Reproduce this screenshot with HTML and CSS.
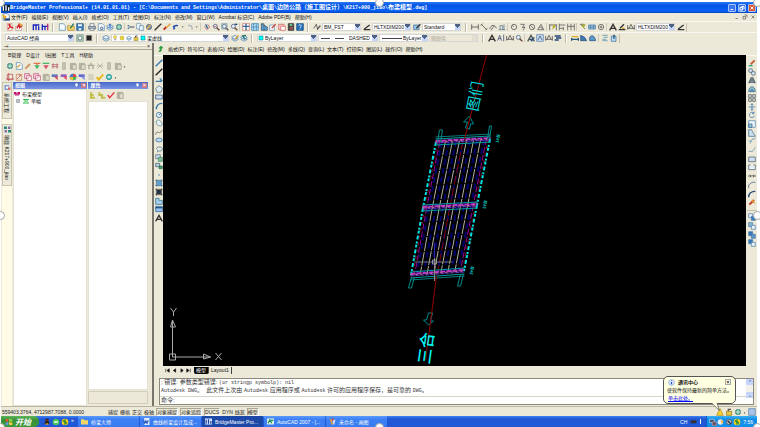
FILE: index.html
```html
<!DOCTYPE html>
<html lang="zh-CN">
<head>
<meta charset="utf-8">
<title>BridgeMaster Professional+</title>
<link rel="stylesheet" href="styles.css">
</head>
<body>
<div class="desktop">
  <header class="titlebar">
    <svg class="icon" viewBox="0 0 12 12"><path fill="#123" d="M0 1h12v10H0z"/><path stroke="#fff" stroke-width="2" d="M2 3v7M6 2v8M10 5v5"/></svg>
    <h1><span class="lat">BridgeMaster Professional+ (14.01.01.01) - [C:\Documents and Settings\Administrator\</span>桌面<span class="lat">\</span>边防公路（施工图设计）<span class="lat">\K217+900_jiao\</span>布梁模型<span class="lat">.dwg]</span></h1>
    <div class="winbtns">
      <button aria-label="最小化"><svg viewBox="0 0 12 12"><path d="M3 9h5"/></svg></button>
      <button aria-label="还原"><svg viewBox="0 0 12 12"><path d="M5 3h5v5M2 5h5v5H2z"/></svg></button>
      <button class="close" aria-label="关闭"><svg viewBox="0 0 12 12"><path d="M3 3l6 6M9 3l-6 6"/></svg></button>
    </div>
  </header>

  <nav class="menubar">
    <svg class="icon" viewBox="0 0 12 12"><path fill="#fff" stroke="#36a" d="M2 1h6l3 3v7H2z"/><path fill="#e8b020" d="M0 2l7 3-3 6z"/><path fill="#247" d="M4 8h8v3H4z"/></svg>
    <div class="items">
    <a href="#">文件(F)</a><a href="#">编辑(E)</a><a href="#">视图(V)</a><a href="#">插入(I)</a><a href="#">格式(O)</a><a href="#">工具(T)</a><a href="#">绘图(D)</a><a href="#">标注(N)</a><a href="#">修改(M)</a><a href="#">窗口(W)</a><a href="#">Acrobat 标记(C)</a><a href="#">Adobe PDF(B)</a><a href="#">帮助(H)</a>
    </div>
    <div class="docbtns">
      <button aria-label="最小化文档"><svg viewBox="0 0 12 12"><path d="M3 9h5"/></svg></button>
      <button aria-label="还原文档"><svg viewBox="0 0 12 12"><path d="M5 2h5v5M2 5h5v5H2z"/></svg></button>
      <button aria-label="关闭文档"><svg viewBox="0 0 12 12"><path d="M3 3l6 6M9 3l-6 6"/></svg></button>
    </div>
  </nav>

  <div class="toolrow">
    <div class="tools" data-icons="pdf pdfmail grip piers piers2 grip new open save sep print preview publish globe sep cut copy globe2 match brush undo caret redo caret sep pan zoomin zoomwin zoomprev sep props palette sheet markup calc2 calc help2 grip textstyle"></div>
    <label class="combo w-s"><select aria-label="文字样式"><option>BM_FST</option></select><i></i></label>
    <div class="tools" data-icons="dimstyle"></div>
    <label class="combo w-s"><select aria-label="标注样式"><option>HLTXDIM200</option></select><i></i></label>
    <div class="tools" data-icons="tablestyle"></div>
    <label class="combo w-s"><select aria-label="表格样式"><option>Standard</option></select><i></i></label>
    <div class="tools" data-icons="grip dimlin dimal dimarc dimord sep dimrad dimjog dimdia dimang sep quick base cont sep leader tol center sep textA dimedit dimtedit"></div>
    <label class="combo w-s"><select aria-label="当前标注样式"><option>HLTXDIM200</option></select><i></i></label>
    <div class="tools end" data-icons="dimstyle"></div>
  </div>

  <div class="toolrow">
    <label class="combo w-l"><select aria-label="工作空间"><option>AutoCAD 经典</option></select><i></i></label>
    <div class="tools" data-icons="gear monitor grip layers"></div>
    <label class="combo w-xl"><span class="tools" data-marks="bulb sun layers lock cyan"></span><select aria-label="图层"><option>梁虚线</option></select><i></i></label>
    <div class="tools" data-icons="layercur layerprev grip"></div>
    <label class="combo w-m"><span class="tools" data-marks="cyan"></span><select aria-label="颜色"><option>ByLayer</option></select><i></i></label>
    <label class="combo w-m"><span class="ltype dashed"></span><select aria-label="线型"><option>DASHED</option></select><i></i></label>
    <label class="combo w-n"><span class="ltype"></span><select aria-label="线宽"><option>ByLayer</option></select><i></i></label>
    <label class="combo w-n off"><select aria-label="打印样式" disabled><option>随颜色</option></select><i></i></label>
    <div class="tools end" data-icons="grip textA textAI dimtedit find sep spell scaleT dimtedit just grip dist area region sep list locate"></div>
  </div>

  <main class="work">
    <aside class="manager">
      <div class="dockgrip"><span>⊣</span><hr><button aria-label="关闭面板">×</button></div>
      <nav class="submenu"><a href="#">B管理</a><a href="#">D设计</a><a href="#">I出图</a><a href="#">T工具</a><a href="#">H帮助</a></nav>
      <div class="tools pad" data-icons="globe new2 pencil treeg treer bridge gcol gpaste gpaste gbridge gcross gcol gpaste dot"></div>
      <div class="tools pad" data-icons="redbox redarrow reddoc reddoc gpaste flag flagr wheel flagb listg check2 cyanball dot"></div>
      <div class="panes">
        <div class="sidetabs">
          <button><svg viewBox="0 0 12 12"><path fill="#68c" d="M1 2h8v8H1z"/><path fill="#fff" d="M3 4h5v4H3z"/><path fill="#d66" d="M7 6h4v4H7z"/></svg><span>系统工程</span></button>
          <button><svg viewBox="0 0 12 12"><path fill="#287" d="M0 1h5v4H0zM7 7h5v4H7z"/><path fill="#86a" d="M7 1h4v4H7zM1 7h4v4H1z"/></svg><span>项目 K217+900_jiao</span></button>
        </div>
        <section class="pane tree">
          <h2>视图<svg viewBox="0 0 12 12"><path d="M6 2v7M4 2h4v4H4z"/></svg><button aria-label="关闭视图">×</button></h2>
          <div class="panebody">
            <ul>
              <li><svg viewBox="0 0 12 12"><path fill="#c0106c" d="M0 2h5v8H3V7H0zM7 2h5v5h-3v3H7zM3 5h6v2H3z"/></svg>布梁模型</li>
              <li class="child"><svg viewBox="0 0 12 12"><path fill="none" stroke="#667" d="M3 3h6v6H3zM6 4v4M4 6h4"/></svg><svg viewBox="0 0 12 12"><path fill="#2db84a" d="M0 2h12v2H0zM2 5h8v2H2zM0 9h12v2H0z"/></svg>单幅</li>
            </ul>
          </div>
        </section>
        <section class="pane prop">
          <h2>属性<svg viewBox="0 0 12 12"><path d="M6 2v7M4 2h4v4H4z"/></svg><button aria-label="关闭属性">×</button></h2>
          <div class="tools" data-icons="yel yel2 redcheck gpaste"></div>
          <div class="panebody"></div>
          <div class="hint"></div>
        </section>
      </div>
    </aside>

    <div class="editor">
      <nav class="menubar sub">
        <svg class="icon" viewBox="0 0 12 12"><path fill="#2b9a40" d="M6 1l4 4H7v3c0 2-3 3-5 2 2-1 2-2 2-5H2z"/></svg>
        <div class="items">
        <a href="#">格式(F)</a><a href="#">符号(C)</a><a href="#">表格(G)</a><a href="#">绘图(D)</a><a href="#">标注(E)</a><a href="#">修改(M)</a><a href="#">多线(Q)</a><a href="#">查询(L)</a><a href="#">文本(T)</a><a href="#">打印(E)</a><a href="#">图层(L)</a><a href="#">操作(O)</a><a href="#">帮助(H)</a>
        </div>
      </nav>
      <div class="stage">
        <div class="rail"><div class="tools v draw" data-icons="line xline pline poly rect arc circle cloud spline ellipse earc insert block point hatch grad region2 table textA"></div></div>
        <svg class="canvas" id="canvas" viewBox="164 55 582 311" role="img" aria-label="桥梁平面图"></svg>
        <div class="rail">
          <div class="tools v modify" data-icons="erase copyobj mirror offset array move rotate scale stretch trim extend breakpt brk join chamfer fillet explode"></div>
          <div class="tools v order" data-icons="ord1 ord2 ord3 ord4"></div>
        </div>
      </div>
      <div class="tabs">
        <svg viewBox="0 0 48 12"><path d="M3 3v6M9 3v6L5 6zM20 3v6l-4-3zM29 3v6l4-3zM39 3v6l4-3zM45 3v6" stroke="#111"/></svg>
        <button class="on">模型</button><button>Layout1</button>
      </div>
      <div class="console">
        <div class="log">
          <p>; 错误: 参数类型错误: <span class="lat">(or stringp symbolp): nil</span></p>
          <p><span class="lat">Autodesk DWG</span>。&nbsp; 此文件上次由 <span class="lat">Autodesk</span> 应用程序或 <span class="lat">Autodesk</span> 许可的应用程序保存，是可靠的 <span class="lat">DWG</span>。</p>
          <label class="prompt">命令: <input type="text" aria-label="命令"></label>
        </div>
        <div class="scroll"><button aria-label="向上">⌃</button><button aria-label="向下">⌄</button></div>
      </div>
    </div>
  </main>

  <div class="status">
    <output>559403.3764, 4712987.7088, 0.0000</output>
    <button>捕捉</button><button>栅格</button><button>正交</button><button>极轴</button><button class="on">对象捕捉</button><button class="on">对象追踪</button><button class="on">DUCS</button><button>DYN</button><button>线宽</button><button class="on">模型</button>
    <div class="tools right" data-icons="warn lock globe dot pane"></div>
  </div>

  <footer class="taskbar">
    <button class="start"><svg viewBox="0 0 12 12"><path fill="#e8542c" d="M1 2l4-1v4L1 6z"/><path fill="#8ad04a" d="M6 1l5 1v4L6 5z"/><path fill="#5a9af0" d="M1 7l4-1v4l-4 1z"/><path fill="#f8cc3c" d="M6 6l5 1v4l-5-1z"/></svg>开始</button>
    <div class="tools quick" data-icons="qq ie360 ball"></div><span class="more">»</span>
    <button class="task"><svg viewBox="0 0 12 12"><path fill="#f6d664" d="M0 2h5l1 2h6v7H0z"/></svg>桥梁大师</button>
    <button class="task"><svg viewBox="0 0 12 12"><path fill="#e8f0ff" d="M2 0h9v12H2z"/><path stroke="#2a5cc0" fill="none" stroke-width="2" d="M1 4l2 5 2-4 2 4 2-5"/></svg>曲线桥梁设计及成...</button>
    <button class="task on"><svg viewBox="0 0 12 12"><path fill="#d8e4ff" d="M0 1h12v10H0z"/><path stroke="#123a9a" stroke-width="2" d="M2 3v7M6 2v8M10 5v5"/></svg>BridgeMaster Pro...</button>
    <button class="task"><svg viewBox="0 0 12 12"><path fill="#d8f0e0" d="M0 1h12v10H0z"/><path stroke="#1f8a60" fill="none" stroke-width="2" d="M2 9l3-6 3 6M7 4h4"/></svg>AutoCAD 2007 - [...</button>
    <button class="task"><svg viewBox="0 0 12 12"><path fill="#e4a03c" d="M1 1l4 2 2 8H4z"/><path fill="#d8e0ff" d="M7 3h4l-2 8H7z"/><path fill="#d04030" d="M5 1h3v3H5z"/></svg>未命名 - 画图</button>
    <div class="lang">CH <svg viewBox="0 0 12 12"><path fill="#333" d="M1 4h10v5H1z"/></svg><b></b></div>
    <div class="tray"><div class="tools" data-icons="net msg speaker ball"></div><time>7:56</time></div>
  </footer>

  <aside class="balloon">
    <h3><svg viewBox="0 0 12 12"><circle cx="6" cy="6" r="5" fill="#dce8ff" stroke="#7a9ad8"/><path stroke="#1c50c8" stroke-width="2" d="M6 5v4M6 2v1"/></svg>通讯中心<button aria-label="关闭通知">×</button></h3>
    <p>使软件保持最新的简单方法。</p>
    <a href="#">单击此处。</a>
    <svg class="tail" viewBox="0 0 12 12"><path fill="#ffffe1" d="M1 0h7l3 10z"/><path fill="none" stroke="#555" d="M1 0l10 10L8 0"/></svg>
  </aside>
  <i class="handle tl"></i><i class="handle tc"></i><i class="handle tr"></i><i class="handle ml"></i><i class="handle mr"></i><i class="handle bl"></i><i class="handle bc"></i><i class="handle br"></i>
</div>
<script src="app.js"></script>
</body>
</html>
```
FILE: styles.css
```css
* { box-sizing: border-box; }
body { margin: 0; background: #fff; color: #111; font: 5px/8px "Liberation Sans", "Noto Sans CJK SC", sans-serif; }
button, select, input { font: inherit; color: inherit; border: 0; padding: 0; margin: 0; background: none; border-radius: 0; }
a { color: inherit; text-decoration: none; }
h1, h2, h3, p, ul { margin: 0; padding: 0; font-size: 5px; line-height: 8px; list-style: none; }
svg { display: block; flex: none; }
p, a, h1, button, li, output { white-space: nowrap; }

.desktop { position: relative; display: flex; flex-direction: column; height: 100vh; padding: 2px 3px 0 1px; overflow: hidden; }
.icon { width: 8px; height: 8px; }

.titlebar { display: flex; align-items: center; flex: none; height: 11px; padding: 0 1px; background: linear-gradient(#2a7af4, #0453e4 30%, #0560f6 80%, #0444c4); color: #fff; }
.titlebar h1 { flex: 1; font-size: 6px; font-weight: bold; overflow: hidden; }
.titlebar .lat { font-weight: bold; }
.winbtns, .docbtns { display: flex; gap: 2px; margin-left: auto; }
.winbtns button { width: 8px; height: 8px; background: #3b78ee; border: 1px solid #a8c4f8; border-radius: 1px; }
.winbtns .close { background: #e0512c; }
.winbtns path { stroke: #fff; stroke-width: 2; fill: none; }
.winbtns svg { width: 6px; height: 6px; }
.docbtns { padding-right: 1px; }
.docbtns svg { width: 6px; height: 6px; }
.docbtns path { stroke: #333; fill: none; }

.menubar { display: flex; align-items: center; flex: none; gap: 1px; height: 8px; padding-left: 1px; background: #ece9d8; }
.items { display: flex; gap: 4px; }
.toolrow { display: flex; align-items: center; flex: none; gap: 1px; height: 11px; padding-left: 4px; background: #ece9d8; border-top: 1px solid #f8f7f0; }
.tools { display: flex; align-items: center; flex: none; }
.tools button { width: 9px; height: 9px; flex: none; display: grid; place-items: center; }
.tools svg { width: 8px; height: 8px; }
.tools .narrow { width: 5px; }
.tools .narrow svg { width: 5px; }
.sep { width: 1px; height: 8px; margin: 0 1px; background: #cfcbb8; }
.grip { width: 2px; height: 9px; margin: 0 3px; border-left: 1px solid #bdb9a4; border-right: 1px solid #fff; }
.end { border-right: 1px solid #c4c0ac; padding-right: 1px; }
.combo { display: flex; align-items: center; flex: none; height: 8px; background: #fff; border: 1px solid #d4d6d8; }
.combo select { flex: 1; min-width: 0; height: 6px; line-height: 6px; appearance: none; padding-left: 1px; }
.combo i { width: 5px; height: 6px; flex: none; background: conic-gradient(from -45deg at 50% 70%, #4d6185 90deg, #c6d5fb 90deg); }
.combo .tools { gap: 1px; }
.combo .tools svg { width: 6px; height: 6px; }
.w-s { width: 39px; }
.w-n { width: 49px; }
.w-m { width: 60px; }
.w-l { width: 69px; }
.w-xl { width: 118px; }
.off { background: #ece9d8; color: #aaa693; }
.off select { color: #aaa693; opacity: 1; }
.combo.off i { background: #e2dfd0; }
.ltype { width: 20px; height: 1px; margin-left: 2px; background: #444; }
.dashed { width: 27px; background: repeating-linear-gradient(90deg, #444 0 9px, transparent 9px 14px); }

.work { display: flex; flex: 1; min-height: 0; background: #ece9d8; }
.manager { display: flex; flex-direction: column; flex: none; width: 153px; border-right: 2px solid #77756a; padding-left: 1px; }
.dockgrip { display: flex; align-items: center; height: 7px; padding: 0 2px; gap: 1px; border-bottom: 1px solid #a9a695; }
.dockgrip hr { flex: 1; height: 2px; margin: 0; border: 0; border-top: 1px solid #fff; border-bottom: 1px solid #cac6b2; }
.submenu { display: flex; gap: 5px; padding: 1px 6px; height: 10px; }
.pad { height: 11px; padding-left: 3px; }
.panes { display: flex; flex: 1; gap: 1px; min-height: 0; padding-right: 4px; }
.sidetabs { display: flex; flex-direction: column; gap: 5px; width: 10px; background: #fffbe6; }
.sidetabs button { display: flex; flex-direction: column; align-items: center; gap: 2px; padding: 1px 0 5px; background: #ece9d8; border: 1px solid #c9c5b0; }
.sidetabs svg { width: 7px; height: 7px; }
.sidetabs span { writing-mode: vertical-rl; text-orientation: sideways; line-height: 8px; }
.pane { display: flex; flex-direction: column; min-width: 0; }
.tree { flex: 5; }
.prop { flex: 4; }
.pane h2 { display: flex; align-items: center; gap: 2px; height: 7px; padding: 0 1px 0 2px; line-height: 7px; color: #fff; background: linear-gradient(#4868c8, #7a96e4); }
.pane h2 svg { width: 5px; height: 5px; margin-left: auto; }
.pane h2 path { fill: none; stroke: #fff; stroke-width: 2; }
.pane h2 button { width: 5px; height: 5px; line-height: 5px; background: #c8788c; color: #fff; }
.panebody { flex: 1; background: #fff; border: 1px solid #e4e1d2; }
.tree li { display: flex; align-items: center; gap: 2px; height: 7px; }
.tree .child { padding-left: 1px; }
.tree li svg { width: 6px; height: 6px; }
.prop .tools { height: 12px; }
.hint { height: 13px; margin: 1px 0 2px; border: 1px solid #d2cebb; }

.editor { display: flex; flex: 1; flex-direction: column; min-width: 0; }
.sub { height: 12px; padding-left: 3px; gap: 3px; }
.sub .items { gap: 3px; }
.stage { display: flex; flex: 1; min-height: 0; }
.rail { flex: none; width: 9px; padding-top: 3px; border-top: 1px solid #f8f7f0; }
.canvas + .rail { width: 11px; padding-left: 1px; }
.v { flex-direction: column; justify-content: space-between; align-items: flex-start; }
.v button { height: 8px; }
.draw { height: 53%; }
.modify { height: 48%; }
.order { height: 12%; margin-top: 4px; border-top: 1px solid #c4c0ac; padding-top: 2px; }
.canvas { flex: 1; min-width: 0; width: 100%; height: 100%; background: #000; }
.canvas text { font-family: "Noto Sans CJK SC", sans-serif; }
.tabs { display: flex; align-items: center; flex: none; height: 8px; margin-left: 9px; padding-left: 1px; }
.tabs svg { width: 28px; height: 7px; margin-right: 2px; }
.tabs button { padding: 0 2px; height: 7px; line-height: 7px; border-right: 1px solid #444; }
.tabs .on { background: #000; color: #fff; border-radius: 0 0 2px 2px; }
.console { display: flex; flex: none; height: 27px; margin: 4px 3px 1px 5px; border: 1px solid #8b897c; background: #fff; }
.log { flex: 1; display: flex; flex-direction: column; color: #333; font-size: 6px; }
.log p { padding-left: 1px; font-size: 6px; line-height: 7px; }
.lat { font: 5px/7px "Liberation Mono", monospace; }
.prompt { display: flex; margin-top: auto; padding-left: 1px; gap: 2px; height: 8px; line-height: 7px; border-top: 1px solid #d8d5c6; }
.prompt input { flex: 1; min-width: 0; height: 6px; }
.scroll { display: flex; flex-direction: column; justify-content: space-between; width: 7px; height: 19px; background: #f2f1ea; }
.scroll button { height: 6px; line-height: 6px; background: #c6d5fb; color: #345; }

.status { display: flex; align-items: center; flex: none; height: 10px; padding: 0 1px; gap: 2px; background: #ece9d8; border-top: 1px solid #b9b6a4; color: #222; }
.status output { width: 104px; }
.status button { height: 8px; line-height: 6px; }
.status > .on { border: 1px solid #aaa794; border-right-color: #fff; border-bottom-color: #fff; }
.right { margin-left: auto; }

.taskbar { display: flex; align-items: stretch; flex: none; height: 11px; background: linear-gradient(#3f82f2, #2258d4 25%, #2158d8); color: #fff; }
.start { display: flex; align-items: center; gap: 2px; width: 38px; padding-left: 4px; font: italic bold 8px/10px "Noto Sans CJK SC", sans-serif; background: linear-gradient(#5db45a, #378f38 40%, #3a9a3a); border-radius: 0 5px 5px 0; }
.start svg { width: 8px; height: 8px; }
.quick { margin-left: 3px; }
.more { width: 9px; padding-left: 2px; }
.task { display: flex; align-items: center; gap: 3px; width: 61px; margin-right: 1px; padding-left: 3px; background: linear-gradient(#5c9afc, #3c80f4 30%, #3a7cf0); border-radius: 1px; overflow: hidden; }
.task.on { background: #1c48a8; }
.task svg { width: 7px; height: 7px; }
.lang { display: flex; align-items: center; gap: 3px; margin-left: auto; padding-right: 5px; }
.lang svg { width: 7px; height: 7px; }
.lang b { width: 1px; height: 5px; background: #fff; }
.tray { display: flex; align-items: center; gap: 2px; padding: 0 4px 0 2px; background: linear-gradient(#3ab2f6, #128ee8 30%, #1290ea); border-left: 1px solid #0a5cb8; }
.tray .tools button { width: 8px; }

.balloon { position: absolute; right: 24px; bottom: 23px; width: 73px; height: 28px; padding: 1px 4px; background: #ffffe1; border: 1px solid #555; border-radius: 5px; }
.balloon h3 { display: flex; align-items: center; gap: 3px; }
.balloon h3 svg { width: 7px; height: 7px; }
.balloon h3 button { width: 6px; height: 6px; margin-left: auto; line-height: 4px; border: 1px solid #aaa; }
.balloon p { margin-left: -1px; margin-right: -4px; }
.balloon a { display: block; color: #00f; text-decoration: underline; }
.tail { position: absolute; right: 15px; bottom: -9px; width: 9px; height: 9px; }

.handle { position: absolute; width: 9px; height: 9px; background: #fff; border: 1px solid #a8a8a8; border-radius: 50%; }
.tl, .tc, .tr { top: -2px; }
.ml, .mr { top: 50%; margin-top: -3px; }
.bl, .bc, .br { bottom: -5px; }
.tl, .ml, .bl { left: -4px; }
.tc, .bc { left: 50%; margin-left: -5px; }
.tr, .mr, .br { right: -2px; }
```
FILE: app.js
```js
// Toolbar glyphs on a 12 x 12 grid.
const p = (d, stroke = '#345', fill = 'none', w = 1) => `<path d="${d}" stroke="${stroke}" fill="${fill}" stroke-width="${w}"/>`;
const c = (x, y, r, fill, stroke = 'none') => `<circle cx="${x}" cy="${y}" r="${r}" fill="${fill}" stroke="${stroke}"/>`;
const sheet = p('M2 1h6l3 3v7H2z', '#58a', '#f4faff');
const lens = c(5, 5, 3, '#e4f0ff', '#346') + p('M7 7l4 4', '#643', 'none', 2);
const stack = p('M1 8l5-3 5 3-5 3z', '#58a', '#cde') + p('M1 5l5-3 5 3-5 3z', '#47a', '#e8f4ff');
const paste = p('M2 2h8v9H2z', '#a6a493', '#b5b3a4') + p('M5 4h6v7H5z', '#a6a493', '#dddac9');
const dim = p('M1 2v8M11 2v8M1 6h10', '#333');
const tee = (a) => p('M1 11l5-9 5 9M3 8h6', a, 'none', 2);
const flag = (a, b) => p('M1 2h9v4H1z', 'none', a) + p('M5 6l5-2v7z', 'none', b);
const ord = (a, b) => p('M1 1h6v6H1z', '#47a', a) + p('M5 5h6v6H5z', '#47a', b);
const glyphs = {
  pdf: p('M2 1h7v10H2z', '#c77', '#fff') + p('M3 9c3-2 4-7 2-7s2 6 6 5', '#d02020', 'none', 2),
  pdfmail: p('M1 5h9v6H1z', '#b88', '#fff') + p('M3 8l3-6 1 5 4-4', '#d02020', 'none', 2) + p('M7 1l4 3', '#e8a020', 'none', 2),
  piers: p('M1 3h10M2 3v8M6 3v8M10 5v6', '#1a22c0', 'none', 2),
  piers2: p('M1 5h10M2 2v9M6 5v6', '#1a22c0', 'none', 2) + p('M10 1v10', '#c03070', 'none', 2),
  new: sheet, new2: sheet + p('M3 8l5-4', '#e0a030', 'none', 2),
  open: p('M1 4h4l1 1h5v6H1z', '#a83', '#f4d468') + p('M5 8l5-7', '#276', 'none', 2),
  save: p('M1 1h10v10H1z', '#257', '#3a7ab8') + p('M3 2h6v3H3zM4 8h4v3H4z', 'none', '#e8f4ff'),
  print: p('M1 5h10v4H1z', '#456', '#b8c4cc') + p('M3 1h6v4H3zM3 8h6v3H3z', '#567', '#fff'),
  preview: sheet + c(7, 8, 2, '#cde', '#346'), publish: stack + p('M6 1v6', '#2a70c0', 'none', 2),
  globe: c(6, 6, 4, '#58b090', '#367') + p('M2 6h8M6 2v8', '#e8f8f0'), globe2: c(6, 6, 4, '#7890b8', '#667') + p('M3 9l5-6', '#e0b040', 'none', 2),
  cut: p('M1 4l10 3M1 8l10-3', '#567') + c(2, 4, 1, '#36a') + c(2, 8, 1, '#36a'),
  copy: p('M1 1h6v8H1z', '#58a', '#fff') + p('M5 4h6v7H5z', '#58a', '#eaf4ff'),
  match: p('M1 11l6-6 4-4', '#333', 'none', 2), brush: p('M1 10l4-4', '#c03020', 'none', 3) + p('M5 7l6-6', '#e0a030', 'none', 2),
  undo: p('M3 10c-1-5 1-7 6-6M2 4l2 5', '#1e4aa8', 'none', 2), redo: p('M9 10c1-5-1-7-6-6', '#b0b6c4', 'none', 2),
  caret: p('M4 5h5L6 8z', 'none', '#555'),
  pan: p('M2 5l4 5 4-4-3-4', '#a44') + p('M4 2l3 6', '#369', 'none', 2), zoomin: lens + p('M3 5h4', '#c33'), zoomwin: lens + p('M1 1h8v8H1z', '#69a'), zoomprev: lens + p('M7 2h4', '#248', 'none', 2),
  props: p('M1 1h10v10H1z', '#c66', '#fff') + p('M6 1v10M1 5h10', '#369', 'none', 2),
  palette: p('M1 1h10v10H1z', '#37a', '#b8e4f8') + p('M4 1v10M8 1v10M1 6h10', '#37a'),
  sheet: p('M2 1v10h9V6z', '#246', '#60a0d0') + p('M2 1h4v10', '#456'), calc2: p('M1 2h8v8H1z', '#c55', '#fcc') + p('M4 5h7v6H4z', '#c55', '#fff'),
  markup: p('M1 3h7v8H1z', '#58a', '#fff') + p('M4 8l6-6', '#c44', 'none', 2), calc: p('M2 1h8v10H2z', '#222', '#444') + p('M4 3h4', '#8fa', 'none', 2) + p('M4 7h5M4 9h5', '#e66'),
  help2: p('M1 1h10v10H1z', '#147', '#2470b8') + p('M4 4c0-2 4-2 4 0S6 6 6 8M6 9v1', '#fff'),
  textstyle: p('M1 8l4-6 2 7', '#222', 'none', 1) + p('M6 10l5-6', '#555', 'none', 2), dimstyle: p('M1 10h10M2 9l8-6', '#333', 'none', 2),
  tablestyle: p('M1 3h8v7H1z', '#369', '#9cc8e8') + p('M5 8l6-6', '#333', 'none', 2),
  dimlin: dim, dimal: p('M2 2l8 8M1 4l3-3M8 11l3-3', '#333'), dimarc: p('M1 9c2-7 8-7 10-1M3 11l4-6', '#333'), dimord: p('M1 10h10M3 10V4h4v6M9 2v8', '#468'),
  dimrad: c(6, 6, 4, 'none', '#444') + p('M6 6L3 3', '#444'), dimjog: p('M2 2h6l-3 5 4-1-3 5', '#444'), dimdia: c(6, 6, 4, 'none', '#444') + p('M3 3l6 6', '#444'), dimang: p('M1 10L6 2l4 8zM3 7c3-2 5 0 5 3', '#444'),
  quick: p('M1 2v9M11 2v9M1 3h10', '#333') + p('M6 2l4 3-5 5z', 'none', '#b8b020'), base: p('M2 1v10M2 3h9M2 8h6M8 6v5', '#444'), cont: p('M1 1v10M6 1v10M11 1v10M1 5h10', '#444'),
  leader: p('M2 2l7 7M2 2h6', '#444') + p('M3 3l7-1-3 6z', 'none', '#b0b030'), tol: p('M1 3h10v6H1z', '#369', '#b8dcf0') + p('M4 3v6M8 3v6M1 6h10', '#369'), center: c(6, 6, 4, 'none', '#444') + p('M6 4v4M4 6h4', '#444'),
  dimedit: p('M1 10h10M3 8l6-6', '#333', 'none', 2) + p('M6 8h4', '#e0a030', 'none', 2), dimtedit: p('M1 3v7M11 3v7M1 8h10M3 8l3-6 3 6', '#333'),
  gear: p('M1 1h10v10H1z', '#78a090', '#b8c8c0') + c(6, 6, 3, '#fff', '#365'), monitor: p('M2 2h8v8H2z', '#888', '#222'),
  layers: stack, bulb: c(6, 4, 3, '#ffe860', '#a93') + p('M5 8h3v2H5z', '#888'), sun: c(6, 6, 4, '#f0d830', '#a93'), lock: p('M2 5h8v6H2z', '#872', '#e8c840') + p('M5 5V2h4', '#654', 'none', 2), cyan: p('M2 2h8v8H2z', '#066', '#0ff'),
  layercur: stack + p('M6 8l5-6', '#e0a030', 'none', 2), layerprev: stack + p('M8 8l-4-5 5-1', '#276', 'none', 2),
  textA: tee('#333'), textAI: p('M1 10l3-8 3 8M2 7h4M10 1v10', '#236', 'none', 1), find: lens, spell: tee('#555') + p('M5 8l2 2 4-5', '#258', 'none', 2), scaleT: p('M1 1h10v10H1z', '#57a', '#cde') + p('M3 9l3-6 3 6', '#247'), just: p('M1 3h9M3 6h8M1 9h6', '#247', 'none', 2),
  dist: p('M1 4h10', '#e0b030', 'none', 2) + p('M1 8h10M1 6v4M11 6v4', '#257', 'none', 2), area: p('M1 2l6 3 3 5H1z', '#247', '#3a7ab0'), region: p('M1 10V5c3-5 8-2 9 5z', '#247', '#5a9ac8'), list: p('M2 2h8M4 5h6M2 8h6M2 10h8', '#48a', 'none', 1), locate: p('M2 3h7v8H2z', '#369', '#bde') + p('M6 1v6', '#247', 'none', 2),
  pencil: p('M2 10l7-7', '#c96', 'none', 3), treeg: p('M1 2h10M6 2v6', '#e07050', 'none', 2) + p('M2 5h8l-4 6z', 'none', '#48b868'), treer: p('M1 2h10', '#48b868', 'none', 2) + p('M2 5h8l-4 6z', 'none', '#d85068'), bridge: p('M1 4h10M3 2v8M9 2v8M1 7h10', '#b04858', 'none', 1),
  gcol: p('M4 1h4v10H4z', '#a6a493', '#c9c6b4'), gpaste: paste, gbridge: p('M1 5h10M3 5v6M9 5v6M6 1v4', '#aaa898', 'none', 2), gcross: p('M2 2l8 8M10 2l-8 8M1 6h10', '#aaa898'),
  dot: p('M4 7h4l-2 3z', 'none', '#222'), redbox: p('M2 2h8v8H2zM4 0v12M0 9h12', '#b84048'), redarrow: p('M2 2h8v9H2z', '#c87858') + p('M3 9l6-6M5 3h4', '#c04040'), reddoc: p('M1 1h7v7H1z', '#b84070', '#fde') + p('M4 4h7v7H4z', '#b84070', '#fff') + p('M5 9l4-4', '#c33'),
  flag: flag('#6078c0', '#d05060'), flagr: flag('#9060c0', '#e05068'), flagb: flag('#6068d0', '#8090e0'), wheel: c(6, 6, 5, '#4878d0') + p('M6 6V1a5 5 0 0 1 5 5z', 'none', '#e04848') + p('M6 6h5a5 5 0 0 1-5 5z', 'none', '#48b850') + p('M6 6v5a5 5 0 0 1-5-5z', 'none', '#e8c030'),
  listg: p('M2 3h8M2 6h8M2 9h8', '#a9a790'), check2: p('M1 6l3 4 7-8', '#e8b820', 'none', 3), cyanball: c(6, 6, 4, '#48c0c0', '#288') + p('M4 6h4', '#fff', 'none', 2),
  yel: p('M3 2v8h6M3 6h4', '#c0c048', 'none', 3), yel2: p('M2 2v4h4v4h5', '#c0c048', 'none', 3), redcheck: p('M1 6l3 4 7-8', '#e03040', 'none', 2),
  line: p('M1 11L11 1', '#3878a8', 'none', 2), xline: p('M1 11L11 1', '#222', 'none', 2), pline: p('M1 8h6c3 0 3-4 0-4M8 9l3-3', '#3878a8', 'none', 2), poly: p('M6 1l5 4-2 6H3L1 5z', '#567', '#dee'), rect: p('M1 3h10v6H1z', '#247', '#cde'), arc: p('M2 11c0-6 4-9 9-9', '#3878a8', 'none', 2), circle: c(6, 6, 4, '#d8e8f4', '#368') + p('M6 6l3-3', '#247'), cloud: p('M2 3c3-3 7-1 7 2 4 2 1 6-2 5-3 1-6-3-5-7z', '#478', '#e8f0f4'), spline: p('M1 10c2-10 5 3 10-7', '#555'), ellipse: '<ellipse cx="6" cy="6" rx="5" ry="3" fill="#bdd8ec" stroke="#2a6898"/>', earc: p('M2 6c0-4 9-4 9 0 0 3-4 4-6 3M4 7v4', '#2a6898'), insert: p('M1 1h7v6H1z', '#567', '#cde') + p('M5 5h6v6H5z', '#386', '#8b9'), block: p('M1 2h6v5H1z', '#356', '#bcd') + p('M6 6h5v4H6z', '#264', '#497'), point: c(6, 6, 1, '#2878b8'),
  hatch: p('M2 1v10M10 1v10M1 2h10M1 10h10', '#147') + p('M3 3h6v6H3z', 'none', '#5aa0d0'), grad: p('M2 1v10M10 1v10M1 2h10M1 10h10', '#111') + p('M3 3h6v6H3z', 'none', '#234'), region2: p('M1 2h5v3h5v6H1z', '#268', '#a8cce4'), table: p('M1 2h10v8H1z', '#258', '#9cc4f0') + p('M1 4h10', '#258', 'none', 2),
  erase: p('M1 10h6', '#3a8', 'none', 2) + p('M4 8l6-6', '#c86040', 'none', 3), copyobj: c(4, 4, 3, '#cde', '#456') + c(8, 8, 3, '#cde', '#456'), mirror: p('M5 2v8H1zM7 2v8h4z', '#345', '#789'), offset: p('M1 10c0-10 10-10 10 0z', '#368', '#8bc') + p('M4 10c0-4 4-4 4 0', '#247'), array: p('M1 1h4v4H1zM7 1h4v4H7zM1 7h4v4H1zM7 7h4v4H7z', '#345'), move: p('M6 1v10M1 6h10M4 3l2-2 2 2M4 9l2 2 2-2', '#2868a8'), rotate: p('M9 3a4 4 0 1 0 1 4M9 1v3H6', '#2868a8', 'none', 1), scale: p('M1 1h10v10H1z', '#58a', '#e8f4fc') + p('M1 6h5v5H1z', '#258', '#9cd'), stretch: p('M1 11V1h4l6 10z', '#368', '#cde'), trim: p('M1 6h4M7 4l4-2M3 10l4-8', '#58a'), extend: p('M1 8h6M7 8l4-6', '#58a'), breakpt: p('M1 3h10v7H1z', '#456', '#cde'), brk: p('M4 3H1v7h10V3H8', '#456', '#e8f0f4'), join: p('M0 6h5M7 6h5M3 4l2 2-2 2M9 4L7 6l2 2', '#222'), chamfer: p('M1 11V6l5-4h5', '#357'), fillet: p('M1 11c0-6 3-9 10-9', '#247', 'none', 2), explode: p('M2 10l7-7', '#c04030', 'none', 3) + p('M6 3l4 5', '#e8a030', 'none', 2),
  ord1: ord('#e8f0f8', '#3a78b8'), ord2: ord('#8bc', '#e8f0f8'), ord3: ord('#3a78b8', '#5a98c8'), ord4: ord('#3a78b8', '#e8f0f8'),
  warn: p('M6 1l5 10H1z', '#a80', '#f8d030'), pane: p('M1 1h10v10H1z', '#57a', '#a8c4e8'), qq: p('M4 1h4v3l2 5H2l2-5z', 'none', '#222') + p('M4 9h4', '#e8b020', 'none', 2) + p('M4 4h4', '#e03020'), ie360: c(6, 6, 5, '#48c858') + p('M3 6h6', '#fff', 'none', 2), ball: c(6, 6, 5, '#f0d020') + p('M3 4l6 4M6 2v8', '#2a8a30', 'none', 2),
  net: p('M1 2h7v5H1z', '#cde', '#357') + p('M5 6h6v5H5z', '#e88', '#456'), msg: c(5, 6, 4, '#e8f0ff') + p('M5 3l5 2-3 4z', 'none', '#f0b030'), speaker: c(6, 6, 4, '#aab8c8', '#456') + p('M4 4l5 5', '#334', 'none', 2)
};
const svg = n => `<svg viewBox="0 0 12 12">${glyphs[n]}</svg>`;
document.querySelectorAll('[data-icons]').forEach(el => {
  el.innerHTML = el.dataset.icons.split(' ').map(n =>
    n === 'sep' || n === 'grip' ? `<span class="${n}"></span>`
      : `<button aria-label="${n}"${n === 'caret' || n === 'dot' ? ' class="narrow"' : ''}>${svg(n)}</button>`).join('');
});
document.querySelectorAll('[data-marks]').forEach(el => { el.innerHTML = el.dataset.marks.split(' ').map(svg).join(''); });

// Bridge plan: two spans between three supports, each support given as left and right ends.
const supports = [[437, 142, 490, 139], [424, 208, 477, 205], [412, 275, 464, 271]];
const at = (s, u) => [s[0] + (s[2] - s[0]) * u, s[1] + (s[3] - s[1]) * u];
const seg = (a, b, color, w = 1, dash = '') => `<path d="M${a}L${b}" stroke="${color}" stroke-width="${w}" stroke-dasharray="${dash}" fill="none"/>`;
let art = '';
for (let i = 0; i < 2; i++) {
  const [a, b] = [supports[i], supports[i + 1]];
  for (let k = 0; k < 7; k++) {
    const u = 0.1 + k * 0.133;
    art += seg(at(a, u), at(b, u), '#00006c', 2, '6 3');
    if (k < 6) art += seg(at(a, u + 0.067), at(b, u + 0.067), '#b4b0a4', 1, '14 1');
  }
  art += seg(at(a, 0.5), at(b, 0.5), '#850000', 1, '9 3');
  for (const [u, v] of [[0.06, -0.01], [0.94, 1.01]]) {
    art += seg(at(a, u), at(b, u), '#9a009a', 1, '6 2') + seg(at(a, (u + v) / 2), at(b, (u + v) / 2), '#90002c', 1, '3 4');
    art += seg(at(a, v), at(b, v), '#00e4e4', 2, '4 2 2 1 3 2');
  }
}
supports.forEach((s, i) => {
  const row = (dy, color, w, dash) => seg([s[0] - 1, s[1] + dy], [s[2] + 1, s[3] + dy], color, w, dash);
  art += row(-3, '#009c9c', 1) + row(3, '#009c9c', 1) + row(-1, '#b838c8', 2, '5 1') + row(1, '#6038c8', 1, '4 1') + row(0, '#d07090', 1, '2 3');
  if (i !== 1) art += row(i ? 5 : -5, '#007c7c', 1);
  art += `<text x="${s[2] + 9}" y="${s[3] + 4}" font-size="4" font-weight="bold" fill="#00d8d8" transform="rotate(-80 ${s[2] + 9} ${s[3] + 4})">${i + 1}#台</text>`;
});
const teal = d => `<path d="${d}" fill="none" stroke="#008c8c"/>`;
art += teal('M438 142l2-12h3l-2 12M488 139l2-13h2l-2 13M412 277l-3 11h3l3-11M461 274l-3 12h3l3-12');
art += teal('M466 128l2-6h-4l6-6 4 8h-3l-1 5zM429 313l-2 7h-3l5 5 5-4h-3l2-8z');
art += seg([487, 55], [465, 139], '#960000') + seg([437, 276], [426, 360], '#960000');
art += `<text x="473" y="111" font-size="15" fill="#00dada" transform="rotate(-79 473 111)" dy="5">图们</text>`;
art += `<text x="424" y="364" font-size="16" font-weight="500" fill="#00f4f4" transform="rotate(-82 424 364)" dy="6">三合</text>`;
art += seg([415, 262], [453, 262], '#777') + seg([435, 243], [435, 258], '#2828b0') + seg([435, 258], [435, 281], '#888') + '<path d="M433 260h4v4h-4z" fill="none" stroke="#999"/>';
art += '<path d="M170 354h6v6h-6zM173 357V320M171 327l2-7 3 7zM173 357h38M204 354l7 3-7 2zM171 308l3 4 3-4M174 312v4M216 353l6 7M222 353l-6 7" fill="none" stroke="#aaa"/>';
document.getElementById('canvas').innerHTML = art;
```
